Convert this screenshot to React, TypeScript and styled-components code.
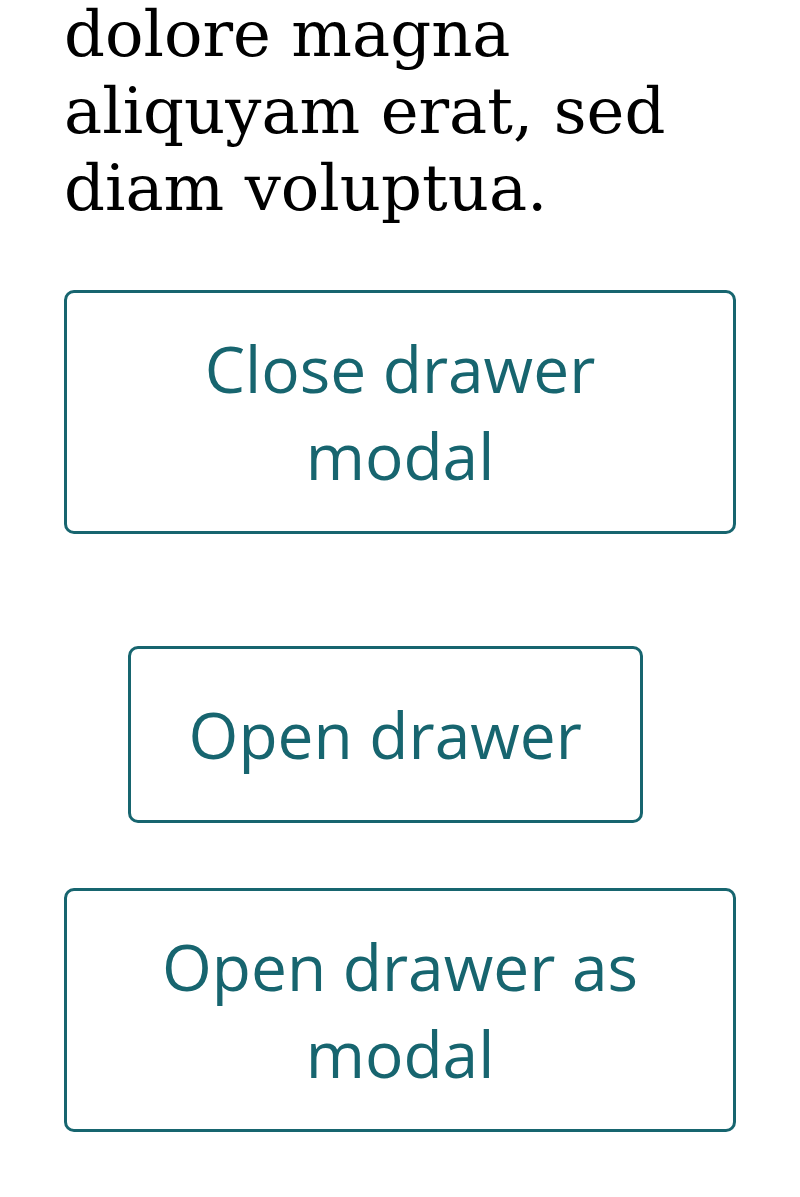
import React from "react";
import styled, { createGlobalStyle } from "styled-components";

const GlobalStyle = createGlobalStyle`
  html, body {
    margin: 0;
    padding: 0;
    background: #ffffff;
  }
  body {
    font-family: "DejaVu Serif", serif;
    overflow: hidden;
  }
`;

const TEAL = "#17656f";

const Page = styled.main`
  display: flex;
  flex-direction: column;
  align-items: stretch;
  width: 672px;
  padding: 0 64px;
`;

const Paragraph = styled.p`
  margin: -4px 0 64px;
  font-family: "DejaVu Serif", serif;
  font-size: 64px;
  line-height: 1.2;
  color: #000000;
`;

const Button = styled.button<{ $inline?: boolean; $spaceAfter: number }>`
  box-sizing: border-box;
  align-self: ${(p) => (p.$inline ? "flex-start" : "stretch")};
  margin: 0 0 ${(p) => p.$spaceAfter}px ${(p) => (p.$inline ? "64px" : "0")};
  padding: ${(p) => (p.$inline ? "41.6px 57.6px" : "32px 57.6px")};
  border: 3px solid ${TEAL};
  border-radius: 10px;
  background: #ffffff;
  color: ${TEAL};
  font-family: "Open Sans", "Noto Sans", sans-serif;
  font-size: 64px;
  line-height: normal;
  text-align: center;
  cursor: pointer;
`;

export default function App() {
  return (
    <>
      <GlobalStyle />
      <Page>
        <Paragraph>dolore magna aliquyam erat, sed diam voluptua.</Paragraph>
        <Button $spaceAfter={112}>Close drawer modal</Button>
        <Button $inline $spaceAfter={65}>
          Open drawer
        </Button>
        <Button $spaceAfter={64}>Open drawer as modal</Button>
      </Page>
    </>
  );
}
